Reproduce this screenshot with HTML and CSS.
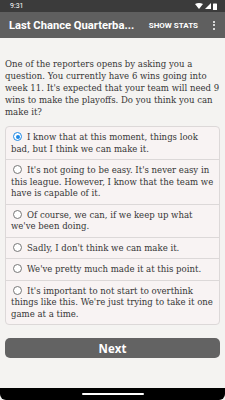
FILE: index.html
```html
<!DOCTYPE html>
<html>
<head>
<meta charset="utf-8">
<link rel="stylesheet" href="styles.css">
</head>
<body>
<div class="screen">
  <div class="status">
    <span class="time">9:31</span>
    <span class="sicons">
      <svg width="8" height="6" viewBox="0 0 8 6"><path d="M0 1 Q4 -1 8 1 L4 6 Z" fill="#fff"/></svg>
      <svg width="6" height="6" viewBox="0 0 6 6"><path d="M6 0 L6 6 L0 6 Z" fill="#fff"/></svg>
      <svg width="4" height="7" viewBox="0 0 4 7"><rect x="0" y="0.5" width="4" height="6.5" rx="0.6" fill="#fff"/></svg>
    </span>
  </div>
  <div class="appbar">
    <span class="title">Last Chance Quarterba...</span>
    <span class="action">SHOW STATS</span>
    <span class="kebab"><i></i><i></i><i></i></span>
  </div>
  <div class="content">
    <p class="question">One of the reporters opens by asking you a question. You currently have 6 wins going into week 11. It's expected that your team will need 9 wins to make the playoffs. Do you think you can make it?</p>
    <div class="options">
      <div class="opt"><span class="radio on"></span>I know that at this moment, things look bad, but I think we can make it.</div>
      <div class="opt"><span class="radio"></span>It's not going to be easy. It's never easy in this league. However, I know that the team we have is capable of it.</div>
      <div class="opt"><span class="radio"></span>Of course, we can, if we keep up what we've been doing.</div>
      <div class="opt"><span class="radio"></span>Sadly, I don't think we can make it.</div>
      <div class="opt"><span class="radio"></span>We've pretty much made it at this point.</div>
      <div class="opt"><span class="radio"></span>It's important to not start to overthink things like this. We're just trying to take it one game at a time.</div>
    </div>
    <div class="next">Next</div>
  </div>
  <div class="navbar"><span class="pill"></span></div>
</div>
</body>
</html>
```
FILE: styles.css
```css
* { box-sizing: border-box; }
html, body { margin: 0; padding: 0; }
body { width: 225px; height: 400px; overflow: hidden; background: #000; }
.screen { width: 225px; height: 400px; display: flex; flex-direction: column; background: #f4f3f1; }
.status { height: 12px; background: #3b3b3b; display: flex; align-items: center; justify-content: space-between; padding: 0 8px 0 10px; color: #fff; font-family: Roboto, sans-serif; font-size: 7px; }
.sicons { display: flex; align-items: center; gap: 2px; }
.appbar { height: 26px; background: #5f5f5f; display: flex; align-items: center; padding: 0 0 0 9px; color: #fff; font-family: Roboto, sans-serif; }
.title { font-size: 11.2px; font-weight: 700; flex: 1; white-space: nowrap; }
.action { font-size: 8px; font-weight: 700; margin-right: 9px; }
.kebab { display: flex; flex-direction: column; gap: 1.5px; width: 14px; align-items: center; margin-right: 4px; }
.kebab i { width: 2px; height: 2px; background: #fff; border-radius: 1px; display: block; }
.content { flex: 1; padding: 0 5px; display: flex; flex-direction: column; }
.question { margin: 20px 0 0 0; font-family: "DejaVu Serif", serif; font-size: 8.55px; line-height: 12px; color: #363636; }
.options { margin-top: 8px; border: 1px solid #dcd8d8; border-radius: 4px; background: #f8f3f3; font-family: "DejaVu Serif", serif; font-size: 8.55px; line-height: 11.5px; color: #363636; }
.opt { padding: 5px 3px 4px 5px; border-top: 1px solid #dcd8d8; }
.opt:first-child { border-top: none; }
.radio { display: inline-block; width: 9px; height: 9px; border: 1px solid #777; border-radius: 50%; margin: 0 5px 0 2px; vertical-align: -1px; background: #fff; position: relative; }
.radio.on { border-color: #1e88e5; }
.radio.on::after { content: ""; position: absolute; left: 1.5px; top: 1.5px; width: 4px; height: 4px; border-radius: 50%; background: #1e88e5; }
.next { margin-top: 13px; height: 20px; background: #636363; border-radius: 5px; color: #fff; font-family: "Open Sans", sans-serif; font-weight: 700; font-size: 11.5px; display: flex; align-items: center; justify-content: center; }
.navbar { height: 12px; margin-top: auto; background: #000; display: flex; justify-content: center; align-items: center; border-radius: 0 0 6px 6px; }
.pill { width: 62px; height: 2px; background: #fff; border-radius: 1px; }
```
